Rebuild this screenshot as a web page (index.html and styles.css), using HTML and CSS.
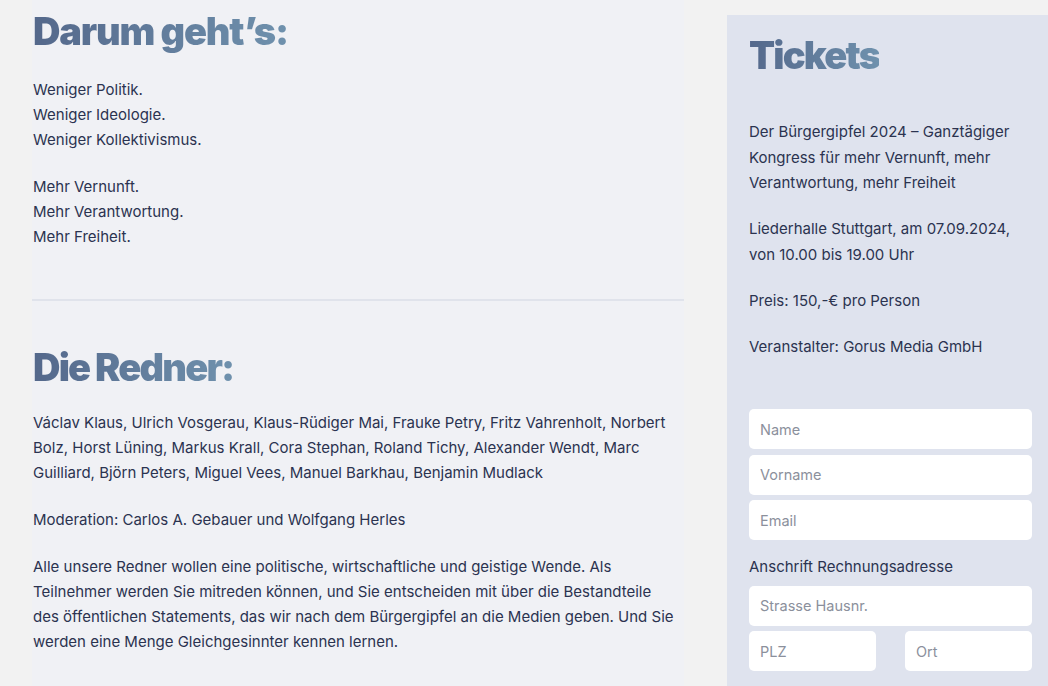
FILE: index.html
```html
<!DOCTYPE html>
<html lang="de">
<head>
<meta charset="utf-8">
<title>Bürgergipfel 2024</title>
<link rel="stylesheet" href="styles.css">
</head>
<body>
<div class="page">
  <main class="content">
    <h2 class="title title-first">Darum geht’s:</h2>
    <p class="text text-lead">Weniger Politik.<br>Weniger Ideologie.<br>Weniger Kollektivismus.</p>
    <p class="text">Mehr Vernunft.<br>Mehr Verantwortung.<br>Mehr Freiheit.</p>
    <hr class="divider">
    <h2 class="title title-second">Die Redner:</h2>
    <p class="text text-speakers">Václav Klaus, Ulrich Vosgerau, Klaus-Rüdiger Mai, Frauke Petry, Fritz Vahrenholt, Norbert Bolz, Horst Lüning, Markus Krall, Cora Stephan, Roland Tichy, Alexander Wendt, Marc Guilliard, Björn Peters, Miguel Vees, Manuel Barkhau, Benjamin Mudlack</p>
    <p class="text">Moderation: Carlos A. Gebauer und Wolfgang Herles</p>
    <p class="text">Alle unsere Redner wollen eine politische, wirtschaftliche und geistige Wende. Als<br>Teilnehmer werden Sie mitreden können, und Sie entscheiden mit über die Bestandteile des öffentlichen Statements, das wir nach dem Bürgergipfel an die Medien geben. Und Sie werden eine Menge Gleichgesinnter kennen lernen.</p>
  </main>
  <aside class="tickets">
    <h2 class="title title-tickets">Tickets</h2>
    <div class="info">
      <p class="info-text">Der Bürgergipfel 2024 – Ganztägiger Kongress für mehr Vernunft, mehr Verantwortung, mehr Freiheit</p>
      <p class="info-text">Liederhalle Stuttgart, am 07.09.2024, von 10.00 bis 19.00 Uhr</p>
      <p class="info-text">Preis: 150,-€ pro Person</p>
      <p class="info-text">Veranstalter: Gorus Media GmbH</p>
    </div>
    <form class="form">
      <input class="field" type="text" placeholder="Name">
      <input class="field" type="text" placeholder="Vorname">
      <input class="field" type="email" placeholder="Email">
      <label class="form-label">Anschrift Rechnungsadresse</label>
      <input class="field" type="text" placeholder="Strasse Hausnr.">
      <div class="field-row">
        <input class="field" type="text" placeholder="PLZ">
        <input class="field" type="text" placeholder="Ort">
      </div>
    </form>
  </aside>
</div>
</body>
</html>
```
FILE: styles.css
```css
html, body {
  margin: 0;
  padding: 0;
}
body {
  background: #f2f2f2;
  font-family: "Inter", "Noto Sans", sans-serif;
  color: #2b3350;
  overflow: hidden;
  height: 686px;
}
.page {
  display: flex;
  align-items: flex-start;
  gap: 43px;
  height: 686px;
}
.content {
  margin-left: 32px;
  width: 652px;
  background: #f0f1f5;
  height: 686px;
  padding-left: 1px;
  box-sizing: border-box;
}
.title {
  margin: 0;
  display: inline-block;
  font-family: "Inter", sans-serif;
  font-weight: 900;
  font-size: 38px;
  line-height: 46px;
  letter-spacing: -1.8px;
  background: linear-gradient(90deg, #54688b 0%, #6f91ad 100%);
  -webkit-background-clip: text;
  background-clip: text;
  color: transparent;
}
.title-first {
  margin-top: 8px;
  letter-spacing: -1.2px;
}
.title-second {
  margin-top: 43px;
}
.title-tickets {
  margin-top: 17px;
}
.text {
  margin: 22px 0 0;
  max-width: 645px;
  font-size: 15px;
  line-height: 25px;
}
.text-lead {
  margin-top: 23px;
}
.text-speakers {
  margin-top: 20px;
}
.divider {
  border: 0;
  height: 2px;
  background: #e0e3eb;
  margin: 50px 0 0 -1px;
}
.tickets {
  margin-top: 15px;
  width: 321px;
  flex: none;
  height: 671px;
  background: #dfe3ee;
  padding: 0 16px 0 22px;
  box-sizing: border-box;
}
.info {
  margin-top: 41px;
  display: flex;
  flex-direction: column;
  gap: 20.5px;
}
.info-text {
  margin: 0;
  font-size: 15px;
  line-height: 25.5px;
}
.form {
  margin-top: 50px;
  display: flex;
  flex-direction: column;
  gap: 5.5px;
}
.field {
  display: block;
  width: 100%;
  box-sizing: border-box;
  height: 40px;
  border: 0;
  border-radius: 5px;
  background: #ffffff;
  padding: 0 11px;
  font-family: "Inter", sans-serif;
  font-size: 14.5px;
  color: #2b3350;
  outline: none;
}
.field::placeholder {
  color: #8b909c;
}
.form-label {
  margin-top: 8px;
  margin-bottom: 1.5px;
  font-size: 15px;
  line-height: 25px;
  color: #2b3350;
}
.field-row {
  display: flex;
  gap: 29px;
}
.field-row .field {
  width: 127px;
}
```
